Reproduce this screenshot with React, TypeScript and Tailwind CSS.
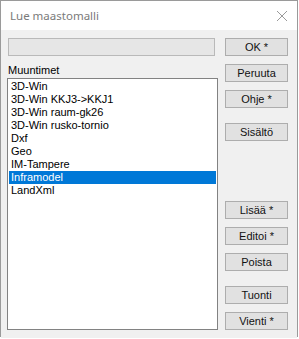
import React from "react";

const items = [
  "3D-Win",
  "3D-Win KKJ3->KKJ1",
  "3D-Win raum-gk26",
  "3D-Win rusko-tornio",
  "Dxf",
  "Geo",
  "IM-Tampere",
  "Inframodel",
  "LandXml",
];

function Btn({ label, className = "" }: { label: string; className?: string }) {
  return (
    <button
      className={
        "h-[18px] w-[63px] shrink-0 border border-[#adadad] bg-[#e1e1e1] text-[11px] leading-[16px] text-[#111] " +
        className
      }
    >
      {label}
    </button>
  );
}

export default function App() {
  return (
    <div
      className="w-[299px] h-[339px] bg-white"
      style={{ fontFamily: '"Liberation Sans", Tahoma, sans-serif' }}
    >
      <div className="w-[298px] h-[337px] border border-[#9a9a9a] flex flex-col">
        {/* title bar */}
        <div className="h-[29px] shrink-0 bg-white flex items-center pl-[9px] pr-[8px]">
          <span
            className="text-[11.5px] text-[#7a7a7a] flex-1"
            style={{ fontFamily: '"Noto Sans", "Open Sans", sans-serif' }}
          >
            Lue maastomalli
          </span>
          <svg width="12" height="12" viewBox="0 0 12 12" className="mr-[1px]">
            <path d="M1 1 L11 11 M11 1 L1 11" stroke="#9a9a9a" strokeWidth="1" />
          </svg>
        </div>

        {/* body */}
        <div className="flex-1 bg-[#f0f0f0] flex pt-[8px] pl-[6px] pb-[8px]">
          <div className="w-[211px] flex flex-col">
            <div className="ml-[1px] w-[207px] h-[18px] border border-[#b9b9b9] bg-[#e6e6e6]" />
            <div className="mt-[8px] h-[14px] text-[11px] leading-[13px] pl-[1px] text-black">
              Muuntimet
            </div>
            <div className="flex-1 border border-[#828282] bg-white p-[1px]">
              {items.map((it) => (
                <div
                  key={it}
                  className={
                    "h-[13px] pl-[2px] text-[11px] leading-[13px] whitespace-nowrap " +
                    (it === "Inframodel" ? "bg-[#0078d7] text-white" : "text-black")
                  }
                >
                  {it}
                </div>
              ))}
            </div>
          </div>

          <div className="ml-[7px] flex flex-col">
            <Btn label="OK *" />
            <Btn label="Peruuta" className="mt-[8px]" />
            <Btn label="Ohje *" className="mt-[8px]" />
            <Btn label="Sisältö" className="mt-[15px]" />
            <Btn label="Lisää *" className="mt-[60px]" />
            <Btn label="Editoi *" className="mt-[8px]" />
            <Btn label="Poista" className="mt-[8px]" />
            <Btn label="Tuonti" className="mt-[15px]" />
            <Btn label="Vienti *" className="mt-[8px]" />
          </div>
        </div>
      </div>
    </div>
  );
}
